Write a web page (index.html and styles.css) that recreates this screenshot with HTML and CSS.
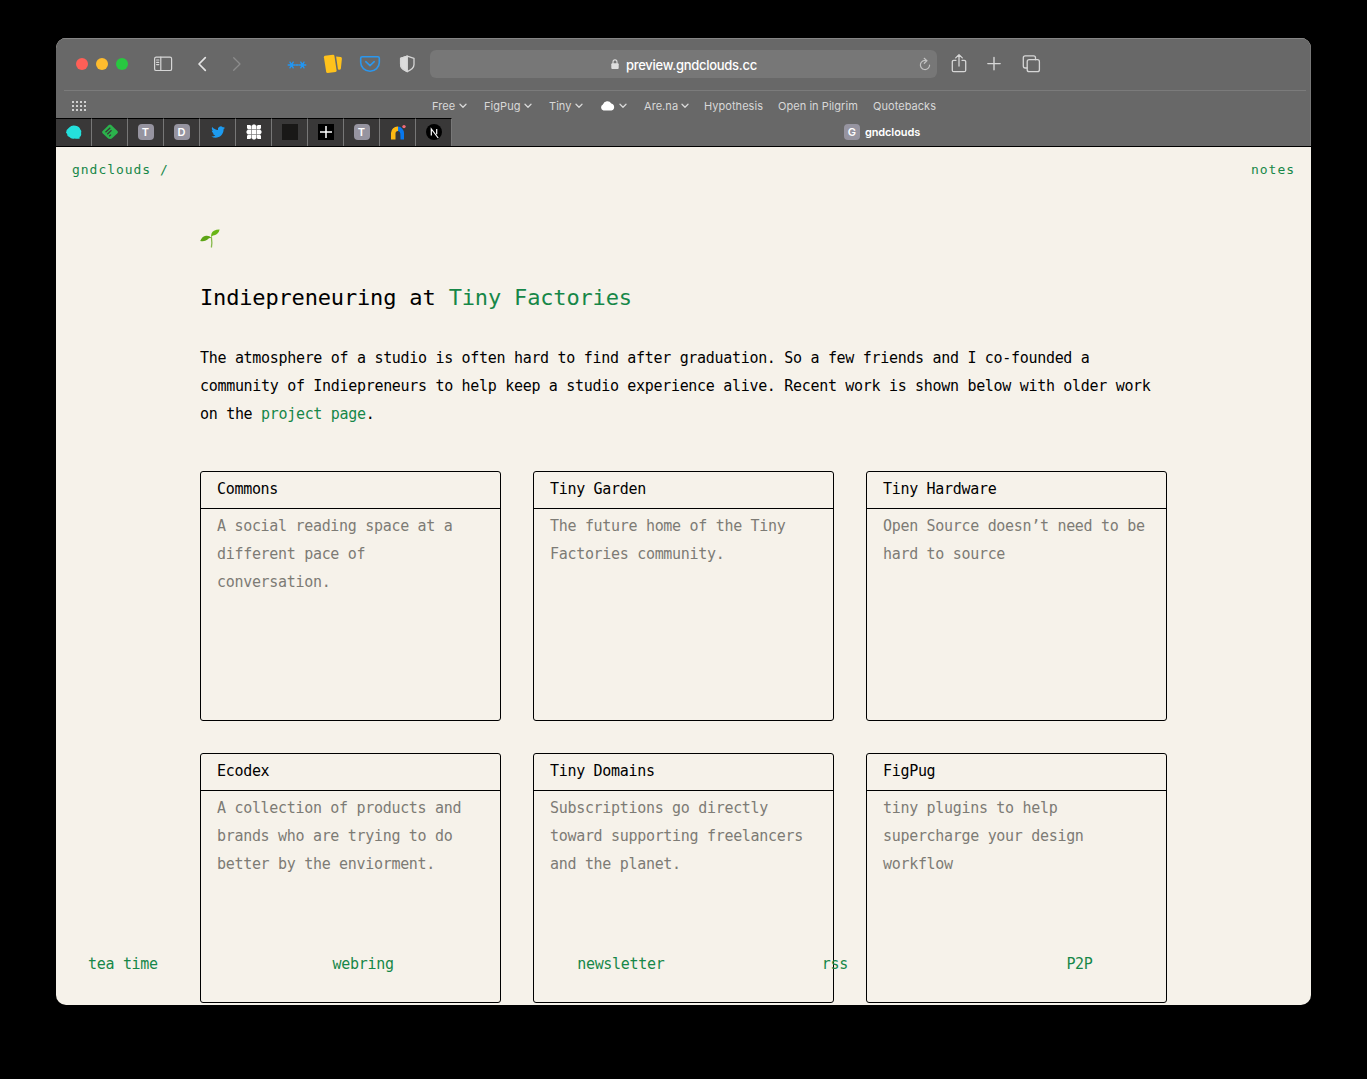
FILE: index.html
```html
<!DOCTYPE html>
<html lang="en">
<head>
<meta charset="utf-8">
<title>gndclouds</title>
<link rel="stylesheet" href="styles.css">
</head>
<body>
<div class="window">
  <header class="chrome">
    <div class="toolbar">
      <div class="lights"><i class="red"></i><i class="amber"></i><i class="green"></i></div>
      <svg class="ic sidebar" viewBox="0 0 24 24"><rect x="3.6" y="5.1" width="17" height="13.4" rx="1.6"/><path d="M9.8 5v13.5M5.6 8h2.2M5.6 10.3h2.2M5.6 12.6h2.2"/></svg>
      <svg class="ic back" viewBox="0 0 24 24"><path class="bold" d="M15.3 5.7 9 12l6.3 6.3"/></svg>
      <svg class="ic forward" viewBox="0 0 24 24"><path d="M8.7 5.7 15 12l-6.3 6.3"/></svg>
      <svg class="ic stars" viewBox="0 0 24 24"><path d="M3.200 13h6.600M5 10.200l3.200 5.600M8.200 10.200 5 15.800M14.200 13h6.600M15.800 10.200l3.200 5.600M19 10.200l-3.200 5.600M11 13h2"/></svg>
      <svg class="ic cards" viewBox="0 0 24 24"><path d="M2.900 5.200q-.1-1.100 1-1.400L11.900 2.700q1.300-.1 1.500 1l2.200 14.800q.1 1.200-1 1.500l-7.900 1.100q-1.200.1-1.500-1.100z"/><path d="m15.100 4.500 4.600.6q1.400.2 1.200 1.600l-1 9.700q-.2 1.400-1.500 1.400l-1.400-.2z"/></svg>
      <svg class="ic pocket" viewBox="0 0 24 24"><path d="M4.200 4.800h15.600q1.500 0 1.500 1.500v4.300a9.300 8.600 0 0 1-18.600 0V6.300q0-1.500 1.500-1.500zM7.800 9.700l4.200 4 4.200-4"/></svg>
      <svg class="ic shield" viewBox="0 0 24 24"><path d="M12.300 4.200 19 6.300v6.200q0 4.300-6.700 7.100-6.700-2.800-6.700-7.100V6.300z"/><path class="fill" d="M12.300 4.200v15.400q-6.700-2.800-6.700-7.100V6.300z"/></svg>
      <div class="address">
        <svg class="lock" viewBox="0 0 8 10"><rect x="0.300" y="4.300" width="7.400" height="5.700" rx="1"/><path d="M2 5V2.900a2 2 0 0 1 4 0V5"/></svg>
        <span>preview.gndclouds.cc</span>
        <svg class="reload" viewBox="0 0 12 14"><path d="M7.500 3.600A4.600 4.600 0 1 0 10.600 8M5.200 1.300l2.700 2.500-2.600 2.500"/></svg>
      </div>
      <svg class="ic share" viewBox="0 0 24 24"><path d="M9 8.300H6.800q-1.500 0-1.500 1.500v8.400q0 1.500 1.500 1.500h10.400q1.500 0 1.500-1.500V9.800q0-1.500-1.500-1.500H15M12 14V2.800M8.700 5.900 12 2.600l3.300 3.300"/></svg>
      <svg class="ic plus" viewBox="0 0 24 24"><path d="M12 5.400v12.400M5.800 11.600h12.400"/></svg>
      <svg class="ic tabs" viewBox="0 0 24 24"><rect x="8.200" y="7.700" width="12.200" height="12" rx="2"/><path d="M8 16H6.200q-1.900 0-1.900-1.900V5.700q0-1.900 1.900-1.900h8.400q1.900 0 1.900 1.900v2"/></svg>
    </div>
    <div class="bookmarks">
      <svg class="grid" viewBox="0 0 14 10"><path d="M1 0v10M5 0v10M9 0v10M13 0v10"/></svg>
      <nav>
        <a class="w-free">Free<svg viewBox="0 0 8 6"><path d="m1 1.300 3 3 3-3"/></svg></a>
        <a class="w-figpug">FigPug<svg viewBox="0 0 8 6"><path d="m1 1.300 3 3 3-3"/></svg></a>
        <a class="w-tiny">Tiny<svg viewBox="0 0 8 6"><path d="m1 1.300 3 3 3-3"/></svg></a>
        <a class="w-cloud"><svg class="cloud" viewBox="0 0 15 11"><path d="M3.500 10.500A3.200 3.200 0 0 1 2.900 4.500 4.700 4.700 0 0 1 11.300 3.500 3.600 3.600 0 0 1 11.500 10.500z"/></svg><svg viewBox="0 0 8 6"><path d="m1 1.300 3 3 3-3"/></svg></a>
        <a class="w-arena">Are.na<svg viewBox="0 0 8 6"><path d="m1 1.300 3 3 3-3"/></svg></a>
        <a class="w-hypothesis">Hypothesis</a>
        <a class="w-pilgrim">Open in Pilgrim</a>
        <a>Quotebacks</a>
      </nav>
    </div>
    <div class="tabbar">
      <div class="pinned"><svg viewBox="0 0 16 16"><path fill="#24e0dc" d="M1 9.500 0 9q.4-4 3.200-5.600Q6 .6 9.700 1.800q3.800.6 4.500 3.400 1.800 1.500.9 3.700.6 3-1.600 4l.3 1.500q-3 .7-5 .1-3.500 1-5.400-1.500Q.8 12 1 9.500z"/></svg></div>
      <div class="pinned"><svg viewBox="0 0 16 16"><path fill="#2bb24c" d="M6.600 1.200q1.400-1.200 2.800 0l6 5.900q1 1.100 0 2.200l-5 4.800q-1 .9-2.400.9t-2.400-.9l-5-4.800q-1-1.100 0-2.200z"/><path fill="none" stroke="#393838" stroke-width="1.300" d="m3.500 8.200 4.800-4.400M5.300 10.200l4.200-3.900M7.200 12.200l1.700-1.600"/></svg></div>
      <div class="pinned"><b>T</b></div>
      <div class="pinned"><b>D</b></div>
      <div class="pinned"><svg viewBox="0 0 24 24"><path fill="#1d9bf0" d="M22.500 5.600c-.8.400-1.600.6-2.400.7.900-.5 1.500-1.300 1.800-2.300-.8.500-1.700.800-2.700 1a4.200 4.200 0 0 0-7.200 3.900C8.500 8.700 5.400 7 3.300 4.500c-1.100 1.900-.6 4.400 1.300 5.700-.7 0-1.300-.2-1.900-.5 0 2 1.400 3.800 3.400 4.200-.6.200-1.300.2-1.900.1.500 1.700 2.100 2.900 3.900 3A8.500 8.500 0 0 1 1.900 18.700c8 5 18.500-.4 18.500-10.400v-.5c.8-.6 1.500-1.300 2.100-2.200z"/></svg></div>
      <div class="pinned"><svg viewBox="0 0 16 16"><path fill="#fff" d="M1 1h3l1.500 1L7 .5h2L10.500 2 12 1h3v3l-1 1.500L15.500 7v2L14 10.500l1 1.500v3h-3l-1.500-1L9 15.500H7L5.500 14 4 15H1v-3l1-1.500L.5 9V7L2 5.500 1 4z"/><path stroke="#777" stroke-width=".7" d="M5.500 2v12M10.500 2v12M2 5.500h12M2 10.500h12"/></svg></div>
      <div class="pinned"><svg viewBox="0 0 16 16"><path fill="#191817" d="M0 0h16v16H0z"/></svg></div>
      <div class="pinned"><svg viewBox="0 0 16 16"><path d="M0 0h16v16H0z"/><path stroke="#fff" stroke-width="1.500" d="M8 2v12M2 8h12"/></svg></div>
      <div class="pinned"><b>T</b></div>
      <div class="pinned"><svg viewBox="0 0 16 16"><path fill="#fdb913" d="M1 15.500V9a6.500 6.500 0 0 1 7-6.400V7q-2.500 0-2.500 2.500v6z"/><path fill="#0878ee" d="M8 2.600A6.500 6.500 0 0 1 14 9v6.500h-3.500q0-1-.2-6Q10.200 7 8 7z"/><circle cx="14" cy="2.600" r="1.700" fill="#f06b79"/></svg></div>
      <div class="pinned"><svg viewBox="0 0 16 16"><circle cx="8" cy="8" r="8"/><path fill="none" stroke="#fff" stroke-width="1.200" d="M5.300 11.500V5l6.900 9M10.700 5v5.200"/></svg></div>
      <div class="current"><b>G</b><span>gndclouds</span></div>
    </div>
  </header>
  <div class="page">
    <nav class="sitenav"><a>gndclouds /</a><a>notes</a></nav>
    <main>
      <svg class="sprout" viewBox="0 0 20 20"><path fill="none" stroke="#86b94a" stroke-width="1.300" d="M11.400 18.500q.9-4 0-10.300"/><path fill="#5da516" d="M11.300 8.700Q9.500 6.300 6 6.700 2 7.200.2 12q4.600.9 7-1.200 1.500-2 4.100-2.100z"/><path fill="#68b516" d="M11.200 8.300Q10.600 3.600 14 1.700 16.500.4 19.600.5q-.3 2.700-2.600 4.600-1.900 1.500-4 1.400-1 .5-1.800 1.800z"/></svg>
      <h1>Indiepreneuring at <a>Tiny Factories</a></h1>
      <p class="intro">The atmosphere of a studio is often hard to find after graduation. So a few friends and I co-founded a community of Indiepreneurs to help keep a studio experience alive. Recent work is shown below with older work on the <a>project page</a>.</p>
      <section class="projects">
        <article><h2>Commons</h2><p>A social reading space at a different pace of conversation.</p></article>
        <article><h2>Tiny Garden</h2><p>The future home of the Tiny Factories community.</p></article>
        <article><h2>Tiny Hardware</h2><p>Open Source doesn’t need to be hard to source</p></article>
        <article><h2>Ecodex</h2><p>A collection of products and brands who are trying to do better by the enviorment.</p></article>
        <article><h2>Tiny Domains</h2><p>Subscriptions go directly toward supporting freelancers and the planet.</p></article>
        <article><h2>FigPug</h2><p>tiny plugins to help supercharge your design workflow</p></article>
      </section>
    </main>
    <footer><a>tea time</a><a>webring</a><a>newsletter</a><a>rss</a><a>P2P</a></footer>
  </div>
</div>
</body>
</html>
```
FILE: styles.css
```css
* { box-sizing: border-box; }
body { margin: 0; height: 1079px; padding: 38px 56px; background: #000; overflow: hidden; }
.window { width: 1255px; height: 967px; border-radius: 10px; overflow: hidden; background: #f6f2ea; display: flex; flex-direction: column; }
svg { display: block; flex: none; }

.chrome { height: 109px; flex: none; background: #686868; font-family: Inter, sans-serif; box-shadow: inset 0 1px #858585, inset -1px 0 #777; }
.toolbar { height: 52px; display: flex; align-items: center; padding-left: 20px; }
.lights { display: flex; gap: 8px; }
.lights i { width: 12px; height: 12px; border-radius: 50%; }
.red { background: #ff5f57; }
.amber { background: #febc2e; }
.green { background: #28c840; }
.ic { width: 24px; height: 24px; fill: none; stroke: #d6d6d6; stroke-width: 1.3; stroke-linecap: round; stroke-linejoin: round; }
.sidebar { margin-left: 23px; stroke-width: 1.2; }
.back { margin-left: 15px; }
.back .bold { stroke-width: 1.7; stroke: #e4e4e4; }
.forward { margin-left: 11px; stroke: #8c8c8c; }
.stars { margin-left: 36px; stroke: #2196f3; stroke-width: 1.4; }
.cards { margin-left: 12px; fill: #ffc21c; stroke: none; }
.pocket { margin-left: 13px; stroke: #2b97ee; stroke-width: 1.6; }
.shield { margin-left: 13px; }
.shield .fill { fill: #dcdcdc; }
.share { margin-left: 10px; }
.plus { margin-left: 11px; stroke-width: 1.4; }
.tabs { margin-left: 13px; }
.address { width: 507px; height: 28px; margin-left: 11px; padding: 0 6px 0 181px; border-radius: 6px; background: #777; display: flex; align-items: center; color: #fff; font-size: 13px; font-weight: 500; }
.lock { width: 8px; height: 10px; margin-right: 7px; fill: #dedede; }
.lock path { fill: none; stroke: #dedede; stroke-width: 1.1; }
.address span { letter-spacing: -0.28px; padding-top: 1px; }
.reload { width: 12px; height: 14px; margin-left: auto; fill: none; stroke: #c2c2c2; stroke-width: 1.2; stroke-linecap: round; }

.bookmarks { height: 28px; margin: 0 5px 0 8px; border-top: 1px solid #7b7b7b; padding: 2px 0 0 8px; display: flex; align-items: center; }
.grid { width: 14px; height: 10px; fill: none; stroke: #d0d0d0; stroke-width: 2; stroke-dasharray: 2 2; }
.bookmarks nav { display: flex; margin-left: 346px; font-size: 11px; letter-spacing: 0.05px; color: #d8d8d8; white-space: nowrap; }
.bookmarks a { display: flex; align-items: center; padding-right: 17px; justify-content: space-between; }
.bookmarks a svg { width: 8px; height: 6px; fill: none; stroke: #d8d8d8; stroke-width: 1.3; stroke-linecap: round; stroke-linejoin: round; }
.bookmarks a .cloud { width: 15px; height: 11px; fill: #fff; stroke: none; }
.w-free { width: 52px; }
.w-figpug { width: 65px; }
.w-tiny { width: 51px; }
.w-cloud { width: 44px; }
.bookmarks .w-arena { width: 60px; padding-right: 15px; }
.w-hypothesis { width: 74px; }
.w-pilgrim { width: 95px; }

.tabbar { height: 29px; display: flex; border-bottom: 1px solid #000; }
.pinned { width: 36px; border-top: 1px solid #000; border-right: 1px solid #777; background: #393838; display: flex; align-items: center; justify-content: center; padding-bottom: 1px; }
.pinned svg { width: 16px; height: 16px; }
.tabbar b { width: 16px; height: 16px; border-radius: 4px; background: #9694a0; color: #fff; font-size: 11px; line-height: 16px; font-weight: 600; text-align: center; }
.current { flex: 1; display: flex; align-items: center; justify-content: center; gap: 5px; padding-left: 1px; color: #fff; font-size: 11px; font-weight: 600; letter-spacing: -0.1px; }

.page { position: relative; flex: 1; overflow: hidden; font-family: "DejaVu Sans Mono", "Liberation Mono", monospace; font-size: 15px; letter-spacing: -0.31px; line-height: 28px; color: #000; }
.page a { color: #168748; }
.sitenav { display: flex; justify-content: space-between; padding: 9px 16px 0 16px; font-size: 13px; letter-spacing: 0.97px; }
main { padding: 45px 144px 0; }
.sprout { width: 20px; height: 20px; }
h1 { margin: 31px 0 0; font-size: 22px; line-height: 36px; font-weight: 400; letter-spacing: -0.16px; }
.intro { margin: 28px 0 43px; }
.projects { display: grid; grid-template-columns: repeat(3, 301px); grid-auto-rows: 250px; gap: 32px; }
article { border: 1px solid #000; border-radius: 3px; }
h2 { margin: 0; height: 37px; border-bottom: 1px solid #000; padding: 3px 16px 0; font-size: 15px; line-height: 28px; font-weight: 400; }
article p { margin: 0; padding: 3px 16px 0; color: #7d7b75; }
footer { position: absolute; left: 32px; right: 0; bottom: 27px; display: grid; grid-template-columns: repeat(5, 1fr); }
```
